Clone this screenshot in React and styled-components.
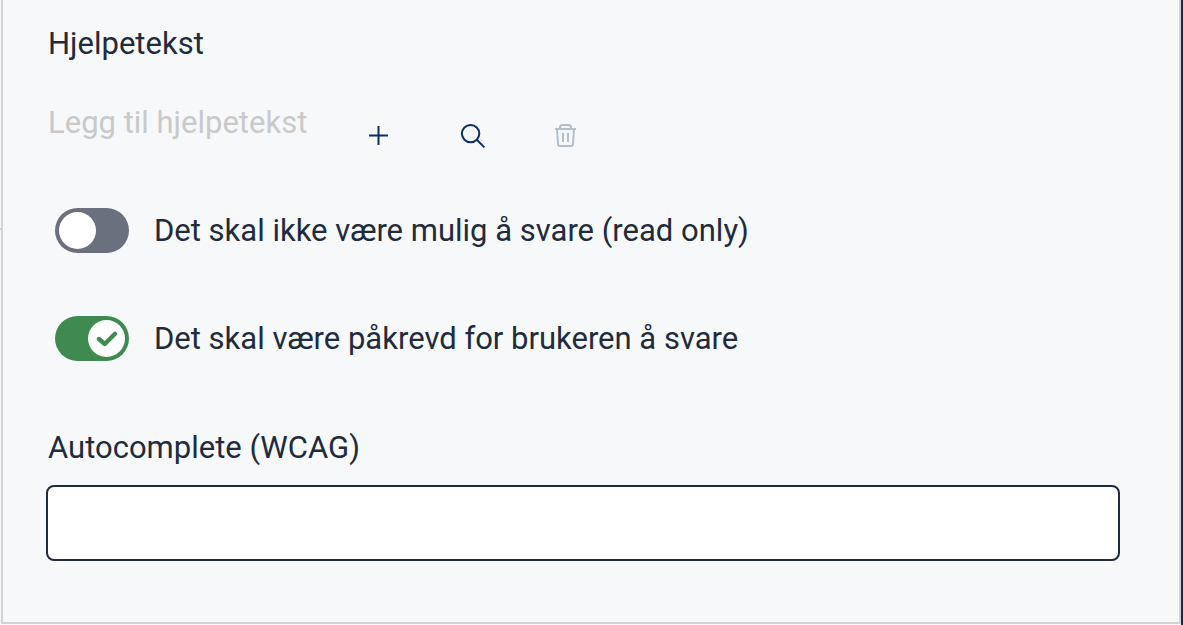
import React, { useState } from "react";
import styled, { createGlobalStyle } from "styled-components";

const GlobalStyle = createGlobalStyle`
  *, *::before, *::after { box-sizing: border-box; }
  body {
    margin: 0;
    background: #f7f8fa;
    color: #212b3c;
    font-family: Roboto, "Liberation Sans", sans-serif;
    font-size: 31px;
    line-height: 40px;
  }
`;

const Shell = styled.div`
  position: relative;
  padding: 0 0 1px 1px;
  border-right: 2px solid #0b2f63;
`;

const Connector = styled.span`
  position: absolute;
  left: 0;
  top: 228px;
  width: 1px;
  height: 2px;
  background: #d0d4d9;
`;

const Panel = styled.form`
  display: flex;
  flex-direction: column;
  padding: 24px 59px 61px 43px;
  border: 2px solid #d0d4d9;
  border-top: 0;
`;

const Heading = styled.label`
  align-self: flex-start;
  padding-left: 2px;
`;

const HelpRow = styled.div`
  display: flex;
  align-items: flex-start;
  margin-top: 39px;
`;

const HelpInput = styled.input`
  width: 288px;
  height: 40px;
  padding: 0 2px;
  border: 0;
  background: transparent;
  color: inherit;
  font: inherit;
  outline-offset: 2px;
  &::placeholder { color: #c9c9c9; opacity: 1; }
`;

const Actions = styled.div`
  display: flex;
  gap: 46px;
  margin: 8px 0 0 20px;
`;

const IconButton = styled.button`
  display: flex;
  align-items: center;
  justify-content: center;
  width: 48px;
  height: 48px;
  padding: 0;
  border: 0;
  background: transparent;
  color: #0b2f63;
  cursor: pointer;
  &:disabled { color: #b3becb; cursor: default; }
`;

const Icon = styled.svg`
  width: 32px;
  height: 32px;
  fill: none;
  stroke: currentColor;
  stroke-width: 2;
`;

const SwitchList = styled.div`
  display: flex;
  flex-direction: column;
  gap: 63px;
  margin: 49px 0 67px 9px;
`;

const SwitchRow = styled.label`
  display: flex;
  align-items: center;
  gap: 25px;
  cursor: pointer;
`;

const Track = styled.span`
  position: relative;
  display: flex;
  flex: none;
  width: 74px;
  height: 45px;
  padding: 4px;
  border-radius: 23px;
  justify-content: ${(p) => (p.$on ? "flex-end" : "flex-start")};
  background: ${(p) => (p.$on ? "#3f8a50" : "#6a707d")};
`;

const SwitchInput = styled.input`
  position: absolute;
  inset: 0;
  width: 100%;
  height: 100%;
  margin: 0;
  opacity: 0;
  cursor: pointer;
`;

const Thumb = styled.span`
  display: flex;
  align-items: center;
  justify-content: center;
  width: 37px;
  height: 37px;
  border-radius: 50%;
  background: #fff;
  color: #3f8a50;
`;

const Check = styled.svg`
  width: 22px;
  height: 18px;
  fill: none;
  stroke: currentColor;
  stroke-width: 4.4;
  stroke-linecap: round;
  stroke-linejoin: round;
`;

const TextField = styled.input`
  width: 100%;
  height: 76px;
  margin-top: 17px;
  padding: 0 16px;
  border: 2px solid #212b3c;
  border-radius: 8px;
  background: #fff;
  color: inherit;
  font: inherit;
`;

function Switch({ label, initial }) {
  const [on, setOn] = useState(initial);
  return (
    <SwitchRow>
      <Track $on={on}>
        <Thumb>
          {on && (
            <Check viewBox="0 0 22 18" aria-hidden="true">
              <path d="M3 9 8.8 14 19 3.8" />
            </Check>
          )}
        </Thumb>
        <SwitchInput
          type="checkbox"
          role="switch"
          checked={on}
          onChange={(e) => setOn(e.target.checked)}
        />
      </Track>
      {label}
    </SwitchRow>
  );
}

export default function App() {
  return (
    <>
      <GlobalStyle />
      <Shell>
        <Connector />
        <Panel onSubmit={(e) => e.preventDefault()}>
          <Heading htmlFor="help-text">Hjelpetekst</Heading>
          <HelpRow>
            <HelpInput id="help-text" type="text" placeholder="Legg til hjelpetekst" />
            <Actions>
              <IconButton type="button" aria-label="Legg til">
                <Icon viewBox="0 0 32 32">
                  <path d="M16.5 7V26M7 16.5H26" />
                </Icon>
              </IconButton>
              <IconButton type="button" aria-label="Søk">
                <Icon viewBox="0 0 32 32">
                  <circle cx="14.6" cy="14.6" r="8.7" />
                  <path d="M20.8 20.8 28.4 28.4" />
                </Icon>
              </IconButton>
              <IconButton type="button" aria-label="Slett" disabled>
                <Icon viewBox="0 0 32 32">
                  <path d="M5 10H26M10 10V8.5Q10 6 12.5 6H18.5Q21 6 21 8.5V10M7 10 8 25Q8.1 27 10.1 27H20.9Q22.9 27 23 25L24 10M13 14V23M18 14V23" />
                </Icon>
              </IconButton>
            </Actions>
          </HelpRow>
          <SwitchList>
            <Switch label="Det skal ikke være mulig å svare (read only)" initial={false} />
            <Switch label="Det skal være påkrevd for brukeren å svare" initial />
          </SwitchList>
          <Heading htmlFor="autocomplete">Autocomplete (WCAG)</Heading>
          <TextField id="autocomplete" type="text" />
        </Panel>
      </Shell>
    </>
  );
}
